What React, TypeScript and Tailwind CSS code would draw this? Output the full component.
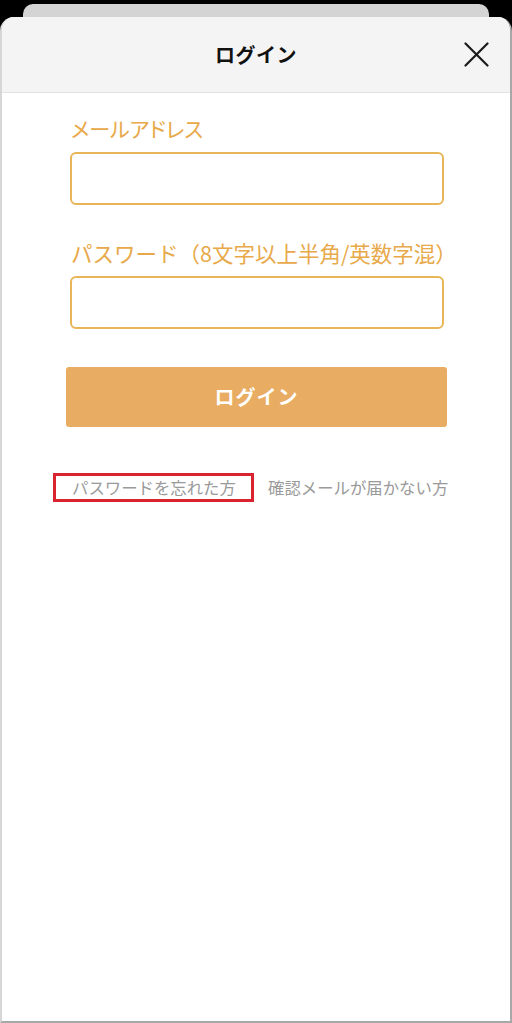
import React from "react";

export default function App() {
  const jp = { fontFamily: '"Noto Sans CJK JP", "Noto Sans", sans-serif' };
  return (
    <div
      className="w-[512px] h-[1023px] bg-black flex flex-col overflow-hidden"
      style={jp}
    >
      <div className="mt-[4px] mx-[23px] h-[13px] shrink-0 rounded-t-[10px] bg-[#d4d4d4]" />
      <div className="flex-1 flex flex-col rounded-t-[14px] bg-white overflow-hidden border-l-2 border-r-2 border-b-2 border-l-[#d6d6d6] border-r-[#a8a8a8] border-b-[#a8a8a8]">
        <div className="h-[76px] shrink-0 bg-[#f4f4f4] border-b border-[#e2e2e2] grid grid-cols-[1fr_auto_1fr] items-center">
          <div />
          <div className="text-[20px] font-bold text-[#111] leading-none tracking-[0.5px]">ログイン</div>
          <div className="flex justify-end pr-[21px]">
            <svg width="25" height="25" viewBox="0 0 25 25" fill="none" stroke="#1a1a1a" strokeWidth="2.2" strokeLinecap="round">
              <path d="M1.5 1.5 L23.5 23.5 M23.5 1.5 L1.5 23.5" />
            </svg>
          </div>
        </div>
        <div className="flex flex-col">
          <div className="ml-[69px] mt-[21px] text-[21px] leading-[28px] text-[#e8a94a] [font-feature-settings:'palt']">メールアドレス</div>
          <div className="ml-[68px] mt-[10px] w-[374px] h-[53px] rounded-[6px] border-2 border-[#e8b558] bg-white" />
          <div className="ml-[69px] mt-[34px] text-[21.5px] leading-[28px] text-[#e8a94a] whitespace-nowrap">
            パスワード（8文字以上半角/英数字混）
          </div>
          <div className="ml-[68px] mt-[9px] w-[374px] h-[53px] rounded-[6px] border-2 border-[#e8b558] bg-white" />
          <div className="ml-[64px] mt-[38px] w-[381px] h-[60px] rounded-[3px] bg-[#e8ad62] flex items-center justify-center text-white text-[20px] font-bold tracking-[1px]">
            ログイン
          </div>
          <div className="mt-[46px] ml-[51px] flex items-center gap-[14px]">
            <div className="w-[201px] h-[29px] border-[3px] border-[#d9232e] flex items-center pl-[16px] text-[16.4px] text-[#9a9a9a] whitespace-nowrap">
              パスワードを忘れた方
            </div>
            <div className="text-[16.4px] text-[#9a9a9a] whitespace-nowrap">確認メールが届かない方</div>
          </div>
        </div>
      </div>
    </div>
  );
}
